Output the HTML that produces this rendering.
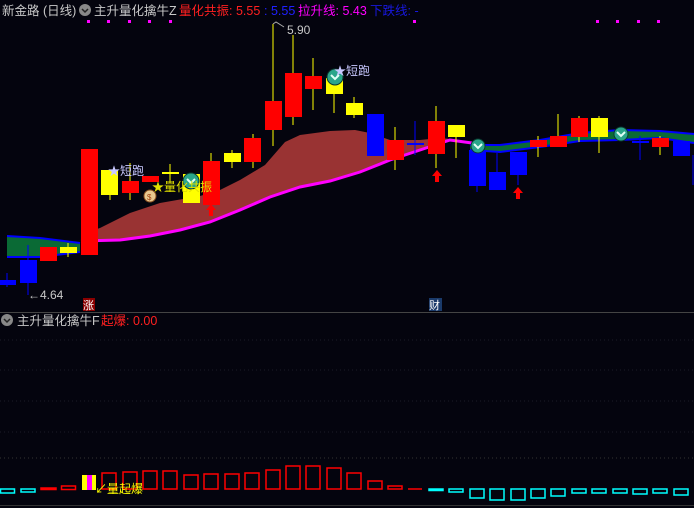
<!DOCTYPE html>
<html><head><meta charset="utf-8"><style>
html,body{margin:0;padding:0;background:#04040e;width:694px;height:508px;overflow:hidden}
svg{display:block}
text{font-family:"Liberation Sans","Noto Sans CJK SC",sans-serif}
</style></head><body>
<svg width="694" height="508" viewBox="0 0 694 508" xmlns="http://www.w3.org/2000/svg">
<rect width="694" height="508" fill="#04040e"/>
<!-- header -->
<text x="2" y="15" font-size="12.5" fill="#c8c8c8">新金路 (日线)</text>
<circle cx="85" cy="10" r="6" fill="#888"/><path d="M82 9 L85 12 L88 9" stroke="#222" stroke-width="1.5" fill="none"/>
<text x="94" y="15" font-size="12.5" fill="#c8c8c8">主升量化擒牛Z</text>
<text x="179" y="15" font-size="12.5" fill="#ff2020">量化共振: 5.55</text>
<text x="264" y="15" font-size="12.5" fill="#2020ff">: 5.55</text>
<text x="298" y="15" font-size="12.5" fill="#ff00ff">拉升线: 5.43</text>
<text x="370" y="15" font-size="12.5" fill="#1818e0">下跌线: -</text>
<g fill="#ff00ff"><rect x="87" y="20" width="3" height="3"/><rect x="107" y="20" width="3" height="3"/><rect x="128" y="20" width="3" height="3"/><rect x="148" y="20" width="3" height="3"/><rect x="169" y="20" width="3" height="3"/><rect x="413" y="20" width="3" height="3"/><rect x="596" y="20" width="3" height="3"/><rect x="616" y="20" width="3" height="3"/><rect x="637" y="20" width="3" height="3"/><rect x="657" y="20" width="3" height="3"/></g>
<!-- left band -->
<path d="M7 236 L40 238 L80 243 L80 252 L40 257 L7 257 Z" fill="#0a6a35"/>
<path d="M7 236 L40 238 L80 243" stroke="#0000ff" stroke-width="2" fill="none"/>
<path d="M7 257 L40 257 L80 252" stroke="#0000ff" stroke-width="2" fill="none"/>
<!-- dark red fill -->
<path d="M81 234 L100 228 L130 213 L160 203 L200 196 L220 190 L240 180 L265 165 L285 142 L300 135 L330 131 L355 130 L370 133 L390 140 L420 140 L440 138 L460 140 L472 143 L450 140 L420 150 L390 160 L360 172 L330 181 L300 187 L270 197 L240 210 L210 222 L180 230 L150 236 L120 240 L81 241 Z" fill="#993333"/>
<path d="M81 241 L120 240 L150 236 L180 230 L210 222 L240 210 L270 197 L300 187 L330 181 L360 172 L390 160 L420 150 L450 140 L472 143" stroke="#ff00ff" stroke-width="3" fill="none"/>
<!-- right band -->
<path d="M470 145 L500 145 L540 140 L580 133 L620 130 L660 131 L694 134 L694 143 L660 138 L620 140 L580 141 L540 147 L500 152 L470 150 Z" fill="#0a6a35"/>
<path d="M470 145 L500 145 L540 140 L580 133 L620 130 L660 131 L694 134" stroke="#0000ff" stroke-width="2" fill="none"/>
<path d="M470 150 L500 152 L540 147 L580 141 L620 140 L660 138 L694 143" stroke="#0000ff" stroke-width="2" fill="none"/>
<!-- candles -->
<g stroke-width="1">
<line x1="7" y1="273" x2="7" y2="287" stroke="#0000ff"/><rect x="0" y="280" width="16" height="5" fill="#0000ff"/>
<line x1="28" y1="245" x2="28" y2="295" stroke="#0000ff"/><rect x="20" y="260" width="17" height="23" fill="#0000ff"/>
<rect x="40" y="247" width="17" height="14" fill="#ff0000"/>
<line x1="68" y1="243" x2="68" y2="257" stroke="#ffff00"/><rect x="60" y="247" width="17" height="6" fill="#ffff00"/>
<rect x="81" y="149" width="17" height="106" fill="#ff0000"/>
<line x1="110" y1="170" x2="110" y2="200" stroke="#ffff00"/><rect x="101" y="170" width="17" height="25" fill="#ffff00"/>
<line x1="130" y1="163" x2="130" y2="200" stroke="#ffff00"/><rect x="122" y="181" width="17" height="12" fill="#ff0000"/>
<rect x="142" y="176" width="17" height="6" fill="#ff0000"/>
<line x1="170" y1="164" x2="170" y2="183" stroke="#ffff00"/><rect x="162" y="172" width="17" height="2" fill="#ffff00"/>
<rect x="183" y="174" width="17" height="29" fill="#ffff00"/>
<line x1="211" y1="153" x2="211" y2="205" stroke="#ffff00"/><rect x="203" y="161" width="17" height="44" fill="#ff0000"/>
<line x1="232" y1="150" x2="232" y2="168" stroke="#ffff00"/><rect x="224" y="153" width="17" height="9" fill="#ffff00"/>
<line x1="253" y1="134" x2="253" y2="168" stroke="#ffff00"/><rect x="244" y="138" width="17" height="24" fill="#ff0000"/>
<line x1="273" y1="24" x2="273" y2="146" stroke="#ffff00"/><rect x="265" y="101" width="17" height="29" fill="#ff0000"/>
<line x1="293" y1="35" x2="293" y2="125" stroke="#ffff00"/><rect x="285" y="73" width="17" height="44" fill="#ff0000"/>
<line x1="313" y1="58" x2="313" y2="110" stroke="#ffff00"/><rect x="305" y="76" width="17" height="13" fill="#ff0000"/>
<line x1="334" y1="78" x2="334" y2="113" stroke="#ffff00"/><rect x="326" y="78" width="17" height="16" fill="#ffff00"/>
<line x1="354" y1="97" x2="354" y2="118" stroke="#ffff00"/><rect x="346" y="103" width="17" height="12" fill="#ffff00"/>
<rect x="367" y="114" width="17" height="42" fill="#0000ff"/>
<line x1="395" y1="127" x2="395" y2="170" stroke="#ffff00"/><rect x="387" y="140" width="17" height="20" fill="#ff0000"/>
<line x1="415" y1="121" x2="415" y2="155" stroke="#0000ff"/><rect x="407" y="143" width="17" height="2" fill="#0000ff"/>
<line x1="436" y1="106" x2="436" y2="168" stroke="#ffff00"/><rect x="428" y="121" width="17" height="33" fill="#ff0000"/>
<line x1="456" y1="125" x2="456" y2="158" stroke="#ffff00"/><rect x="448" y="125" width="17" height="12" fill="#ffff00"/>
<line x1="477" y1="150" x2="477" y2="192" stroke="#0000ff"/><rect x="469" y="150" width="17" height="36" fill="#0000ff"/>
<line x1="497" y1="153" x2="497" y2="190" stroke="#0000ff"/><rect x="489" y="172" width="17" height="18" fill="#0000ff"/>
<line x1="518" y1="152" x2="518" y2="185" stroke="#0000ff"/><rect x="510" y="152" width="17" height="23" fill="#0000ff"/>
<line x1="538" y1="136" x2="538" y2="157" stroke="#ffff00"/><rect x="530" y="140" width="17" height="7" fill="#ff0000"/>
<line x1="558" y1="114" x2="558" y2="147" stroke="#ffff00"/><rect x="550" y="136" width="17" height="11" fill="#ff0000"/>
<line x1="579" y1="116" x2="579" y2="142" stroke="#ffff00"/><rect x="571" y="118" width="17" height="19" fill="#ff0000"/>
<line x1="599" y1="116" x2="599" y2="153" stroke="#ffff00"/><rect x="591" y="118" width="17" height="19" fill="#ffff00"/>
<line x1="640" y1="136" x2="640" y2="160" stroke="#0000ff"/><rect x="632" y="141" width="17" height="2" fill="#0000ff"/>
<line x1="660" y1="136" x2="660" y2="155" stroke="#ffff00"/><rect x="652" y="138" width="17" height="9" fill="#ff0000"/>
<rect x="673" y="141" width="17" height="15" fill="#0000ff"/>
<line x1="693" y1="155" x2="693" y2="185" stroke="#0000ff"/>
</g>
<!-- icons -->
<g>
<circle cx="191" cy="181" r="8" fill="#2aa58a" stroke="#0a3a30"/><path d="M187 179 L191 183 L195 179" stroke="#e0fff5" stroke-width="2" fill="none"/>
<circle cx="335" cy="77" r="8" fill="#2aa58a" stroke="#0a3a30"/><path d="M331 75 L335 79 L339 75" stroke="#e0fff5" stroke-width="2" fill="none"/>
<circle cx="478" cy="146" r="7" fill="#2aa58a" stroke="#0a3a30"/><path d="M474 144 L478 148 L482 144" stroke="#e0fff5" stroke-width="2" fill="none"/>
<circle cx="621" cy="134" r="7" fill="#2aa58a" stroke="#0a3a30"/><path d="M617 132 L621 136 L625 132" stroke="#e0fff5" stroke-width="2" fill="none"/>
<circle cx="150" cy="196" r="6" fill="#e8c890" stroke="#8a5020"/><text x="147" y="200" font-size="8" fill="#a04010">$</text>
</g>
<g fill="#ff0000">
<path d="M211 204 L206 210 L209 210 L209 216 L213 216 L213 210 L216 210 Z"/>
<path d="M437 170 L432 176 L435 176 L435 182 L439 182 L439 176 L442 176 Z"/>
<path d="M518 187 L513 193 L516 193 L516 199 L520 199 L520 193 L523 193 Z"/>
</g>
<text x="108" y="175" font-size="12" fill="#c8c8ff">★短跑</text>
<text x="334" y="75" font-size="12" fill="#c8c8ff">★短跑</text>
<text x="152" y="191" font-size="12" fill="#e0e000">★量化共振</text>
<path d="M273 24 L276 22 L284 27" stroke="#aaa" fill="none"/>
<text x="287" y="34" font-size="12" fill="#c8c8c8">5.90</text>
<text x="28" y="299" font-size="12" fill="#c8c8c8">←4.64</text>
<rect x="83" y="298" width="12" height="13" fill="#8b0000"/><text x="83" y="309" font-size="11" fill="#fff">涨</text>
<rect x="429" y="298" width="13" height="13" fill="#1a3a6a"/><text x="429" y="309" font-size="11" fill="#fff">财</text>
<!-- separator -->
<rect x="0" y="312" width="694" height="1" fill="#444"/>
<circle cx="7" cy="320" r="6" fill="#888"/><path d="M4 319 L7 322 L10 319" stroke="#222" stroke-width="1.5" fill="none"/>
<text x="17" y="325" font-size="12.5" fill="#c8c8c8">主升量化擒牛F</text>
<text x="101" y="325" font-size="12.5" fill="#ff2020">起爆: 0.00</text>
<g stroke="#1c1c28" stroke-dasharray="1,3">
<line x1="0" y1="340" x2="694" y2="340"/><line x1="0" y1="370" x2="694" y2="370"/><line x1="0" y1="401" x2="694" y2="401"/><line x1="0" y1="432" x2="694" y2="432"/>
</g>
<line x1="0" y1="458" x2="694" y2="458" stroke="#333" stroke-dasharray="1,3"/>
<rect x="0" y="505" width="694" height="1" fill="#333"/>
<!-- sub bars -->
<g fill="none" stroke-width="1.5">
<rect x="0.5" y="489" width="14" height="4" stroke="#00ffff"/>
<rect x="21" y="489" width="14" height="3" stroke="#00ffff"/>
<rect x="41" y="488" width="15" height="1.5" fill="#ff0000" stroke="#ff0000"/>
<rect x="61.5" y="486" width="14" height="3.5" stroke="#ff0000"/>
<rect x="102" y="473" width="14" height="16" stroke="#ff0000"/>
<rect x="123" y="472" width="14" height="17" stroke="#ff0000"/>
<rect x="143" y="471" width="14" height="18" stroke="#ff0000"/>
<rect x="163" y="471" width="14" height="18" stroke="#ff0000"/>
<rect x="184" y="475" width="14" height="14" stroke="#ff0000"/>
<rect x="204" y="474" width="14" height="15" stroke="#ff0000"/>
<rect x="225" y="474" width="14" height="15" stroke="#ff0000"/>
<rect x="245" y="473" width="14" height="16" stroke="#ff0000"/>
<rect x="266" y="470" width="14" height="19" stroke="#ff0000"/>
<rect x="286" y="466" width="14" height="23" stroke="#ff0000"/>
<rect x="306" y="466" width="14" height="23" stroke="#ff0000"/>
<rect x="327" y="468" width="14" height="21" stroke="#ff0000"/>
<rect x="347" y="473" width="14" height="16" stroke="#ff0000"/>
<rect x="368" y="481" width="14" height="8" stroke="#ff0000"/>
<rect x="388" y="486" width="14" height="3" stroke="#ff0000"/>
<line x1="408" y1="489" x2="422" y2="489" stroke="#ff0000"/>
<rect x="429" y="489" width="14" height="1.5" fill="#00ffff" stroke="#00ffff"/>
<rect x="449" y="489" width="14" height="3" stroke="#00ffff"/>
<rect x="470" y="489" width="14" height="9" stroke="#00ffff"/>
<rect x="490" y="489" width="14" height="11" stroke="#00ffff"/>
<rect x="511" y="489" width="14" height="11" stroke="#00ffff"/>
<rect x="531" y="489" width="14" height="9" stroke="#00ffff"/>
<rect x="551" y="489" width="14" height="7" stroke="#00ffff"/>
<rect x="572" y="489" width="14" height="4" stroke="#00ffff"/>
<rect x="592" y="489" width="14" height="4" stroke="#00ffff"/>
<rect x="613" y="489" width="14" height="4" stroke="#00ffff"/>
<rect x="633" y="489" width="14" height="5" stroke="#00ffff"/>
<rect x="653" y="489" width="14" height="4" stroke="#00ffff"/>
<rect x="674" y="489" width="14" height="6" stroke="#00ffff"/>
</g>
<rect x="82" y="475" width="14" height="15" fill="#ffff00"/>
<rect x="87" y="475" width="5" height="15" fill="#ff00ff"/>
<text x="95" y="493" font-size="12" fill="#ffff00">↙量起爆</text>
</svg>
</body></html>
